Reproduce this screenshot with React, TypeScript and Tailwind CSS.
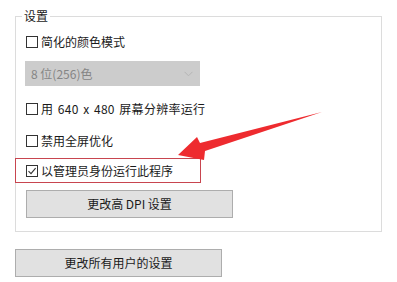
const font = { fontFamily: '"Noto Sans CJK SC", "Noto Sans", sans-serif' };

function Check({ checked = false }: { checked?: boolean }) {
  return (
    <span className="flex h-[12px] w-[12px] shrink-0 items-center justify-center border border-[#333333] bg-white">
      {checked && (
        <svg width="10" height="10" viewBox="0 0 10 10">
          <path d="M1.5 5.2 L4 7.6 L8.6 2.2" fill="none" stroke="#333333" strokeWidth="1.1" />
        </svg>
      )}
    </span>
  );
}

function Row({ label, checked, wide }: { label: string; checked?: boolean; wide?: boolean }) {
  return (
    <div className="flex h-[16px] items-center gap-[3px] text-[12px] leading-none text-[#1a1a1a]">
      <Check checked={checked} />
      <span className={wide ? "tracking-[0.3px] [word-spacing:1.5px]" : ""}>{label}</span>
    </div>
  );
}

export default function App() {
  return (
    <div className="relative h-[282px] w-[397px] overflow-hidden bg-white pl-[15px] pt-[16px]" style={font}>
      <div className="relative h-[216px] w-[367px] border border-[#dcdcdc]">
        <span className="absolute left-[6px] top-[-9px] bg-white px-[2px] text-[12px] leading-[16px] text-[#1a1a1a]">
          设置
        </span>
        <div className="pl-[10px] pt-[17px]">
          <Row label="简化的颜色模式" />
          <div className="ml-[-1px] mt-[11px] flex h-[25px] w-[175px] items-center justify-between bg-[#cccccc] pl-[6px] pr-[7px] text-[12px] text-[#858585]">
            <span>8 位(256)色</span>
            <svg width="9" height="6" viewBox="0 0 9 6">
              <path d="M0.5 0.8 L4.5 4.8 L8.5 0.8" fill="none" stroke="#b5b5b5" strokeWidth="1" />
            </svg>
          </div>
          <div className="mt-[15px]">
            <Row label="用 640 x 480 屏幕分辨率运行" wide />
          </div>
          <div className="mt-[16px]">
            <Row label="禁用全屏优化" />
          </div>
          <div className="ml-[-11px] mt-[9px] flex h-[25px] w-[186px] items-center border border-[#c8454f] pl-[10px]">
            <Row label="以管理员身份运行此程序" checked />
          </div>
          <button className="mt-[7px] flex h-[28px] w-[207px] items-center justify-center border border-[#adadad] bg-[#e1e1e1] text-[12px] text-[#1a1a1a]">
            更改高 DPI 设置
          </button>
        </div>
      </div>
      <button className="mt-[17px] flex h-[28px] w-[207px] items-center justify-center border border-[#adadad] bg-[#e1e1e1] text-[12px] text-[#1a1a1a]">
        更改所有用户的设置
      </button>
      <svg className="pointer-events-none absolute left-0 top-0" width="397" height="282" viewBox="0 0 397 282">
        <polygon points="178,155 197,137 200,143 322,112 205,151 204,160" fill="#ee2b2f" />
      </svg>
    </div>
  );
}
